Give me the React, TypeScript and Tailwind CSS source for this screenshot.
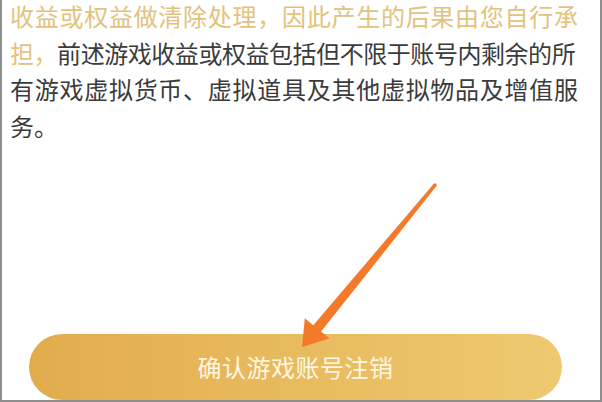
export default function App() {
  return (
    <div
      className="relative w-[602px] h-[402px] bg-white border-l-2 border-r-2 border-b-2 border-[#8e8e8e] flex flex-col overflow-hidden"
      style={{ fontFamily: '"Noto Sans CJK SC", "Noto Sans", sans-serif' }}
    >
      {/* 说明文字 */}
      <div className="pl-[8px] pr-[22px] mt-[-2px] text-[24px] leading-[36.5px] text-[#3b3b3b]">
        <div className="[text-align-last:justify] text-[#e2c27c]">
          收益或权益做清除处理，因此产生的后果由您自行承
        </div>
        <div className="whitespace-nowrap tracking-[-0.45px]">
          <span className="text-[#e2c27c]">担，</span>
          前述游戏收益或权益包括但不限于账号内剩余的所
        </div>
        <div className="[text-align-last:justify]">
          有游戏虚拟货币、虚拟道具及其他虚拟物品及增值服
        </div>
        <div>务。</div>
      </div>

      {/* 确认按钮 */}
      <div className="mt-auto pl-[27px] pr-[38px]">
        <button className="w-full h-[66px] rounded-full bg-gradient-to-r from-[#e2ac4d] to-[#eec970] flex items-center justify-center text-[24px] text-[#fff6e2] tracking-[0.5px]">
          确认游戏账号注销
        </button>
      </div>

      {/* 指示箭头 */}
      <svg
        className="absolute left-0 top-0 pointer-events-none"
        width="602"
        height="402"
        viewBox="0 0 602 402"
      >
        <polygon
          points="434.4,186.1 319.1,331.6 327.6,338.5 300,347 302.8,318.3 311.3,325.2 431.6,183.9"
          fill="#f47a2a"
          strokeLinejoin="round"
        />
        <circle cx="433" cy="185" r="1.8" fill="#f47a2a" />
      </svg>
    </div>
  );
}
